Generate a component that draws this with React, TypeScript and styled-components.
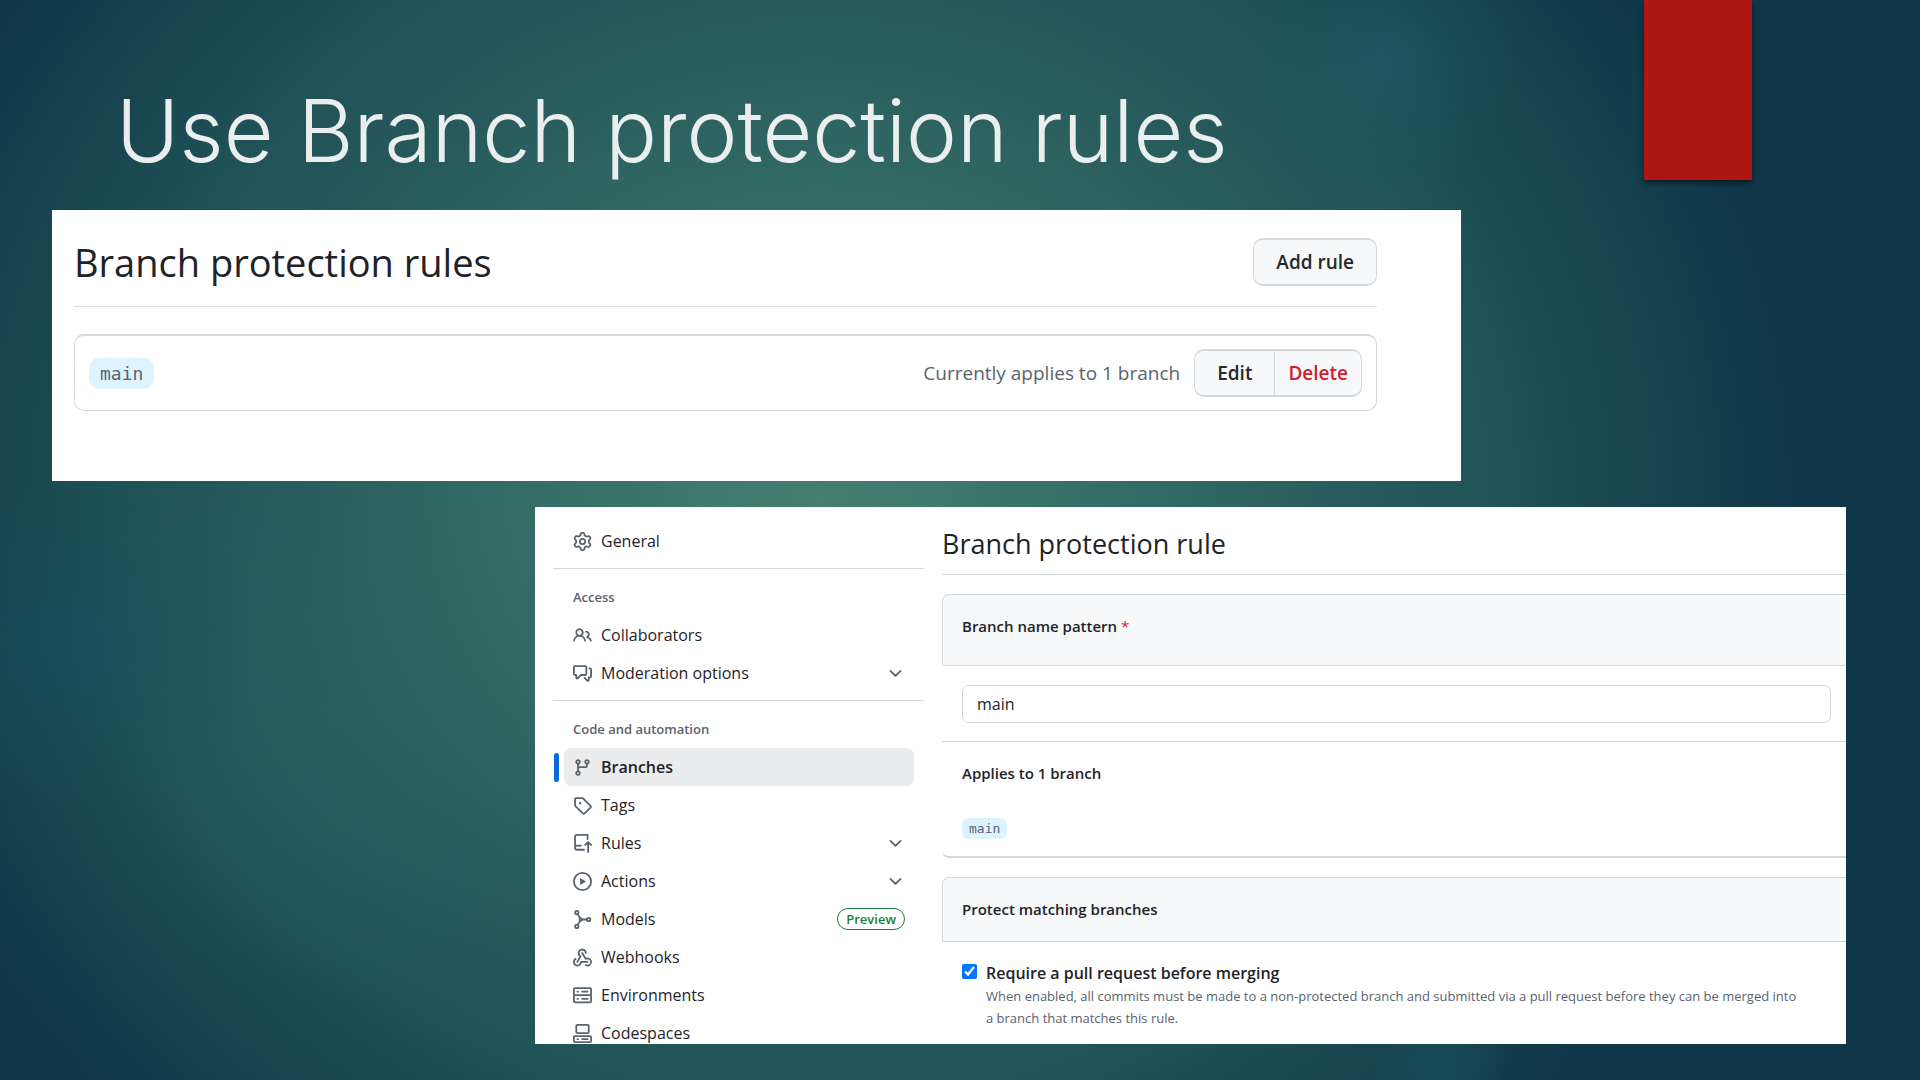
import React from "react";
import styled, { createGlobalStyle } from "styled-components";

const ui = `"Open Sans", "Noto Sans", sans-serif`;
const mono = `"DejaVu Sans Mono", "Liberation Mono", monospace`;
const line = "#d1d9e0";
const ink = "#1f2328";
const muted = "#59636e";

const GlobalStyle = createGlobalStyle`
  *, *::before, *::after { box-sizing: border-box; }
  body { margin: 0; background: #123c4a; font-family: ${ui}; color: ${ink}; }
  h1, h2, h3, p, ul { margin: 0; padding: 0; }
  ul { list-style: none; }
`;

const Slide = styled.main`
  position: relative;
  display: flex;
  flex-direction: column;
  min-height: 100vh;
  padding: 0 74px 36px 52px;
  overflow: hidden;
  background:
    radial-gradient(circle at 1385px 60px, rgba(30, 88, 102, 0.7) 0, rgba(30, 88, 102, 0) 130px),
    radial-gradient(circle at 1440px 1070px, rgba(28, 84, 98, 0.6) 0, rgba(28, 84, 98, 0) 70px),
    radial-gradient(circle at 90px 640px, rgba(26, 80, 98, 0.6) 0, rgba(26, 80, 98, 0) 170px),
    radial-gradient(circle at 330px 720px, rgba(44, 102, 100, 0.4) 0, rgba(44, 102, 100, 0) 280px),
    radial-gradient(ellipse 1000px 900px at 820px 500px, #467f70 0%, #326b65 33%, #285a5c 54%, #1f5156 70%, #184550 82%, #0f3749 98%);
`;

const Ribbon = styled.div`
  position: absolute;
  top: 0;
  right: 168px;
  width: 108px;
  height: 180px;
  background: #ae1613;
  box-shadow: 0 3px 5px rgba(0, 0, 0, 0.5);
`;

const Title = styled.h1`
  padding: 81px 300px 29px 64px;
  font-family: Inter, Lato, sans-serif;
  font-size: 86px;
  line-height: 100px;
  font-weight: 300;
  color: #ebeeee;
`;

const RulesCard = styled.section`
  margin-right: 385px;
  padding: 28px 84px 70px 22px;
  background: #fff;
`;

const RulesHeader = styled.header`
  display: flex;
  align-items: center;
  justify-content: space-between;
  padding-bottom: 20px;
  border-bottom: 1px solid #dde2e7;
`;

const RulesHeading = styled.h2`
  font-size: 38px;
  line-height: 48px;
  font-weight: 400;
`;

const Button = styled.button<{ $danger?: boolean }>`
  height: 48px;
  padding: 0 22px;
  border: solid ${line};
  border-width: 2px 1px;
  border-radius: 10px;
  background: #f6f8fa;
  color: ${(p) => (p.$danger ? "#cf222e" : "#25292e")};
  font-family: ${ui};
  font-size: 19px;
  font-weight: 600;
  white-space: nowrap;
`;

const ButtonGroup = styled.div`
  display: flex;
  ${Button}:first-child { border-radius: 10px 0 0 10px; }
  ${Button}:last-child { border-radius: 0 10px 10px 0; border-left: 0; padding: 0 13px; }
`;

const RuleRow = styled.div`
  display: flex;
  align-items: center;
  gap: 14px;
  margin-top: 27px;
  padding: 13px 14px;
  border: solid ${line};
  border-width: 2px 1px 1px;
  border-radius: 10px;
`;

const BranchTag = styled.code<{ $large?: boolean }>`
  display: block;
  width: fit-content;
  padding: 0 ${(p) => (p.$large ? 11 : 7)}px;
  border-radius: ${(p) => (p.$large ? 10 : 6)}px;
  background: #ddf4ff;
  color: ${muted};
  font-family: ${mono};
  font-size: ${(p) => (p.$large ? 18 : 13)}px;
  line-height: ${(p) => (p.$large ? 31 : 21)}px;
`;

const AppliesNote = styled.span`
  margin-left: auto;
  color: ${muted};
  font-size: 19px;
`;

const SettingsCard = styled.section`
  display: grid;
  grid-template-columns: 389px 1fr;
  column-gap: 18px;
  max-height: 537px;
  margin: 26px 0 0 483px;
  overflow: hidden;
  background: #fff;
`;

const Sidebar = styled.nav`
  padding: 15px 0 0 18px;
`;

const NavGroup = styled.div`
  & + & {
    margin-top: 8px;
    padding-top: 9px;
    border-top: 1px solid ${line};
  }
`;

const NavHeading = styled.h3`
  padding: 0 20px;
  color: ${muted};
  font-size: 13px;
  line-height: 38px;
  font-weight: 600;
`;

const NavLink = styled.a<{ $current?: boolean }>`
  position: relative;
  display: flex;
  align-items: center;
  gap: 9px;
  height: 38px;
  margin: 0 10px 0 11px;
  padding: 0 9px;
  border-radius: 7px;
  background: ${(p) => (p.$current ? "#ebecee" : "transparent")};
  color: ${ink};
  font-size: 16px;
  font-weight: ${(p) => (p.$current ? 600 : 400)};
  text-decoration: none;

  &::before {
    content: "";
    display: ${(p) => (p.$current ? "block" : "none")};
    position: absolute;
    left: -10px;
    top: 5px;
    bottom: 4px;
    width: 5px;
    border-radius: 3px;
    background: #0969da;
  }
`;

const Icon = styled.svg`
  flex: none;
  width: 19px;
  height: 19px;
  fill: ${muted};
`;

const NavLabel = styled.span`
  flex: 1;
`;

const Preview = styled.span`
  padding: 0 8px;
  border: 1px solid #1a7f37;
  border-radius: 11px;
  color: #1a7f37;
  font-size: 13px;
  line-height: 20px;
  font-weight: 600;
`;

const Detail = styled.div`
  padding-top: 15px;
`;

const DetailHeading = styled.h2`
  height: 53px;
  border-bottom: 1px solid ${line};
  font-size: 27px;
  line-height: 44px;
  font-weight: 400;
`;

const BoxHeader = styled.div<{ $tall?: boolean }>`
  height: ${(p) => (p.$tall ? 72 : 65)}px;
  margin-top: 19px;
  padding-left: 19px;
  border: 1px solid ${line};
  border-right: 0;
  border-radius: 7px 0 0 0;
  background: #f6f8fa;
  font-size: 15px;
  line-height: 62px;
  font-weight: 600;
`;

const BoxRow = styled.div`
  padding: 19px 15px 18px 20px;
  border-bottom: 1px solid ${line};
`;

const PatternInput = styled.input`
  display: block;
  width: 100%;
  height: 38px;
  padding: 0 14px;
  border: 1px solid ${line};
  border-radius: 7px;
  background: #fff;
  color: ${ink};
  font-family: ${ui};
  font-size: 16px;
`;

const AppliesRow = styled.div`
  padding: 19px 20px 17px;
  border-bottom: 2px solid ${line};
  border-radius: 0 0 0 7px;
`;

const AppliesTitle = styled.h3`
  margin-bottom: 33px;
  font-size: 15px;
  line-height: 24px;
  font-weight: 600;
`;

const Required = styled.span`
  color: #d1242f;
  font-weight: 400;
`;

const CheckRow = styled.div`
  display: grid;
  grid-template-columns: 15px 1fr;
  column-gap: 9px;
  padding: 19px 15px 16px 20px;
`;

const Check = styled.input`
  width: 15px;
  height: 15px;
  margin: 3px 0 0;
  accent-color: #0075ff;
`;

const CheckLabel = styled.label`
  font-size: 16px;
  line-height: 24px;
  font-weight: 600;
`;

const CheckNote = styled.p`
  grid-column: 2;
  padding-right: 30px;
  color: ${muted};
  font-size: 13px;
  line-height: 22px;
`;

const icons = {
  gear: "M8 0a8.2 8.2 0 0 1 .701.031C9.444.095 9.99.645 10.16 1.29l.288 1.107c.018.066.079.158.212.224.231.114.454.243.668.386.123.082.233.09.299.071l1.103-.303c.644-.176 1.392.021 1.82.63.27.385.506.792.704 1.218.315.675.111 1.422-.364 1.891l-.814.806c-.049.048-.098.147-.088.294.016.257.016.515 0 .772-.01.147.038.246.088.294l.814.806c.475.469.679 1.216.364 1.891a7.977 7.977 0 0 1-.704 1.217c-.428.61-1.176.807-1.82.63l-1.102-.302c-.067-.019-.177-.011-.3.071a5.909 5.909 0 0 1-.668.386c-.133.066-.194.158-.211.224l-.29 1.106c-.168.646-.715 1.196-1.458 1.26a8.006 8.006 0 0 1-1.402 0c-.743-.064-1.289-.614-1.458-1.26l-.289-1.106c-.018-.066-.079-.158-.212-.224a5.738 5.738 0 0 1-.668-.386c-.123-.082-.233-.09-.299-.071l-1.103.303c-.644.176-1.392-.021-1.82-.63a8.12 8.12 0 0 1-.704-1.218c-.315-.675-.111-1.422.363-1.891l.815-.806c.05-.048.098-.147.088-.294a6.214 6.214 0 0 1 0-.772c.01-.147-.038-.246-.088-.294l-.815-.806C.635 6.045.431 5.298.746 4.623a7.92 7.92 0 0 1 .704-1.217c.428-.61 1.176-.807 1.82-.63l1.102.302c.067.019.177.011.3-.071.214-.143.437-.272.668-.386.133-.066.194-.158.211-.224l.29-1.106C6.009.645 6.556.095 7.299.03 7.53.01 7.764 0 8 0Zm-.571 1.525c-.036.003-.108.036-.137.146l-.289 1.105c-.147.561-.549.967-.998 1.189-.173.086-.34.183-.5.29-.417.278-.97.423-1.529.27l-1.103-.303c-.109-.03-.175.016-.195.045-.22.312-.412.644-.573.99-.014.031-.021.11.059.19l.815.806c.411.406.562.957.53 1.456a4.709 4.709 0 0 0 0 .582c.032.499-.119 1.05-.53 1.456l-.815.806c-.081.08-.073.159-.059.19.162.346.353.677.573.989.02.03.085.076.195.046l1.102-.303c.56-.153 1.113-.008 1.53.27.161.107.328.204.501.29.447.222.85.629.997 1.189l.289 1.105c.029.109.101.143.137.146a6.6 6.6 0 0 0 1.142 0c.036-.003.108-.036.137-.146l.289-1.105c.147-.561.549-.967.998-1.189.173-.086.34-.183.5-.29.417-.278.97-.423 1.529-.27l1.103.303c.109.029.175-.016.195-.045.22-.313.411-.644.573-.99.014-.031.021-.11-.059-.19l-.815-.806c-.411-.406-.562-.957-.53-1.456a4.709 4.709 0 0 0 0-.582c-.032-.499.119-1.05.53-1.456l.815-.806c.081-.08.073-.159.059-.19a6.464 6.464 0 0 0-.573-.989c-.02-.03-.085-.076-.195-.046l-1.102.303c-.56.153-1.113.008-1.53-.27a4.44 4.44 0 0 0-.501-.29c-.447-.222-.85-.629-.997-1.189l-.289-1.105c-.029-.11-.101-.143-.137-.146a6.6 6.6 0 0 0-1.142 0ZM11 8a3 3 0 1 1-6 0 3 3 0 0 1 6 0ZM9.5 8a1.5 1.5 0 1 0-3.001.001A1.5 1.5 0 0 0 9.5 8Z",
  people: "M2 5.5a3.5 3.5 0 1 1 5.898 2.549 5.508 5.508 0 0 1 3.034 4.084.75.75 0 1 1-1.482.235 4 4 0 0 0-7.9 0 .75.75 0 0 1-1.482-.236A5.507 5.507 0 0 1 3.102 8.05 3.493 3.493 0 0 1 2 5.5ZM11 4a3.001 3.001 0 0 1 2.22 5.018 5.01 5.01 0 0 1 2.56 3.012.749.749 0 0 1-.885.954.752.752 0 0 1-.549-.514 3.507 3.507 0 0 0-2.522-2.372.75.75 0 0 1-.574-.73v-.352a.75.75 0 0 1 .416-.672A1.5 1.5 0 0 0 11 5.5.75.75 0 0 1 11 4Zm-5.5-.5a2 2 0 1 0-.001 3.999A2 2 0 0 0 5.5 3.5Z",
  comments: "M1.75 1h8.5c.966 0 1.75.784 1.75 1.75v5.5A1.75 1.75 0 0 1 10.25 10H7.061l-2.574 2.573A1.458 1.458 0 0 1 2 11.543V10h-.25A1.75 1.75 0 0 1 0 8.25v-5.5C0 1.784.784 1 1.75 1ZM1.5 2.75v5.5c0 .138.112.25.25.25h1a.75.75 0 0 1 .75.75v2.19l2.72-2.72a.749.749 0 0 1 .53-.22h3.5a.25.25 0 0 0 .25-.25v-5.5a.25.25 0 0 0-.25-.25h-8.5a.25.25 0 0 0-.25.25Zm13 2a.25.25 0 0 0-.25-.25h-.5a.75.75 0 0 1 0-1.5h.5c.966 0 1.75.784 1.75 1.75v5.5A1.75 1.75 0 0 1 14.25 12H14v1.543a1.458 1.458 0 0 1-2.487 1.03L9.22 12.28a.749.749 0 0 1 .326-1.275.749.749 0 0 1 .734.215l2.22 2.22v-2.19a.75.75 0 0 1 .75-.75h1a.25.25 0 0 0 .25-.25Z",
  branch: "M9.5 3.25a2.25 2.25 0 1 1 3 2.122V6A2.5 2.5 0 0 1 10 8.5H6a1 1 0 0 0-1 1v1.128a2.251 2.251 0 1 1-1.5 0V5.372a2.25 2.25 0 1 1 1.5 0v1.836A2.493 2.493 0 0 1 6 7h4a1 1 0 0 0 1-1v-.628A2.25 2.25 0 0 1 9.5 3.25Zm-6 0a.75.75 0 1 0 1.5 0 .75.75 0 0 0-1.5 0Zm8.25-.75a.75.75 0 1 0 0 1.5.75.75 0 0 0 0-1.5ZM4.25 12a.75.75 0 1 0 0 1.5.75.75 0 0 0 0-1.5Z",
  tag: "M1 7.775V2.75C1 1.784 1.784 1 2.75 1h5.025c.464 0 .91.184 1.238.513l6.25 6.25a1.75 1.75 0 0 1 0 2.474l-5.026 5.026a1.75 1.75 0 0 1-2.474 0l-6.25-6.25A1.752 1.752 0 0 1 1 7.775Zm1.5 0c0 .066.026.13.073.177l6.25 6.25a.25.25 0 0 0 .354 0l5.025-5.025a.25.25 0 0 0 0-.354l-6.25-6.25a.25.25 0 0 0-.177-.073H2.75a.25.25 0 0 0-.25.25ZM6 5a1 1 0 1 1 0 2 1 1 0 0 1 0-2Z",
  push: "M1 2.5A2.5 2.5 0 0 1 3.5 0h8.75a.75.75 0 0 1 .75.75v3.5a.75.75 0 0 1-1.5 0V1.5h-8a1 1 0 0 0-1 1v6.708A2.493 2.493 0 0 1 3.5 9h3.25a.75.75 0 0 1 0 1.5H3.5a1 1 0 0 0 0 2h5.75a.75.75 0 0 1 0 1.5H3.5A2.5 2.5 0 0 1 1 11.5ZM12.22 6.22a.75.75 0 0 1 1.06 0l2.5 2.5a.75.75 0 0 1-1.06 1.06L13.5 8.56v6.69a.75.75 0 0 1-1.5 0V8.56l-1.22 1.22a.75.75 0 0 1-1.06-1.06Z",
  play: "M8 0a8 8 0 1 1 0 16A8 8 0 0 1 8 0ZM1.5 8a6.5 6.5 0 1 0 13 0 6.5 6.5 0 0 0-13 0Zm4.879-2.773 4.264 2.559a.25.25 0 0 1 0 .428l-4.264 2.559A.25.25 0 0 1 6 10.559V5.442a.25.25 0 0 1 .379-.215Z",
  webhook: "M5.5 4.25a2.25 2.25 0 0 1 4.5 0 .75.75 0 0 0 1.5 0 3.75 3.75 0 1 0-6.14 2.889l-2.272 4.258a.75.75 0 0 0 1.324.706L7 7.25a.75.75 0 0 0-.309-1.015A2.25 2.25 0 0 1 5.5 4.25ZM7.364 3.607a.75.75 0 0 1 1.03.257l2.608 4.349a3.75 3.75 0 1 1-.628 6.785.75.75 0 0 1 .752-1.299 2.25 2.25 0 1 0-.033-3.88.75.75 0 0 1-1.03-.256L7.107 4.636a.75.75 0 0 1 .257-1.03ZM2.9 8.776A.75.75 0 0 1 2.625 9.8 2.25 2.25 0 1 0 6 11.75a.75.75 0 0 1 .75-.751h5.5a.75.75 0 0 1 0 1.5H7.425a3.751 3.751 0 1 1-5.55-3.998.75.75 0 0 1 1.024.274Z",
  server: "M1.75 1h12.5c.966 0 1.75.784 1.75 1.75v4c0 .372-.116.717-.314 1 .198.283.314.628.314 1v4a1.75 1.75 0 0 1-1.75 1.75H1.75A1.75 1.75 0 0 1 0 12.75v-4c0-.358.109-.707.314-1a1.739 1.739 0 0 1-.314-1v-4C0 1.784.784 1 1.75 1ZM1.5 2.75v4c0 .138.112.25.25.25h12.5a.25.25 0 0 0 .25-.25v-4a.25.25 0 0 0-.25-.25H1.75a.25.25 0 0 0-.25.25Zm.25 5.75a.25.25 0 0 0-.25.25v4c0 .138.112.25.25.25h12.5a.25.25 0 0 0 .25-.25v-4a.25.25 0 0 0-.25-.25ZM7 4.75A.75.75 0 0 1 7.75 4h4.5a.75.75 0 0 1 0 1.5h-4.5A.75.75 0 0 1 7 4.75ZM7.75 10h4.5a.75.75 0 0 1 0 1.5h-4.5a.75.75 0 0 1 0-1.5ZM3 4.75A.75.75 0 0 1 3.75 4h.5a.75.75 0 0 1 0 1.5h-.5A.75.75 0 0 1 3 4.75ZM3.75 10h.5a.75.75 0 0 1 0 1.5h-.5a.75.75 0 0 1 0-1.5Z",
  codespaces: "M0 11.25c0-.966.784-1.75 1.75-1.75h12.5c.966 0 1.75.784 1.75 1.75v3A1.75 1.75 0 0 1 14.25 16H1.75A1.75 1.75 0 0 1 0 14.25Zm2-9.5C2 .784 2.784 0 3.75 0h8.5C13.216 0 14 .784 14 1.75v5a1.75 1.75 0 0 1-1.75 1.75h-8.5A1.75 1.75 0 0 1 2 6.75Zm1.75-.25a.25.25 0 0 0-.25.25v5c0 .138.112.25.25.25h8.5a.25.25 0 0 0 .25-.25v-5a.25.25 0 0 0-.25-.25Zm-2 9.5a.25.25 0 0 0-.25.25v3c0 .138.112.25.25.25h12.5a.25.25 0 0 0 .25-.25v-3a.25.25 0 0 0-.25-.25ZM7 12.75a.75.75 0 0 1 .75-.75h4.5a.75.75 0 0 1 0 1.5h-4.5a.75.75 0 0 1-.75-.75Zm-4 0a.75.75 0 0 1 .75-.75h.5a.75.75 0 0 1 0 1.5h-.5a.75.75 0 0 1-.75-.75Z",
  chevron: "M12.78 5.22a.749.749 0 0 1 0 1.06l-4.25 4.25a.749.749 0 0 1-1.06 0L3.22 6.28a.749.749 0 1 1 1.06-1.06L8 8.939l3.72-3.719a.749.749 0 0 1 1.06 0Z",
};

type IconName = keyof typeof icons | "models";

function Glyph({ name }: { name: IconName }) {
  if (name === "models") {
    return (
      <Icon viewBox="0 0 16 16" aria-hidden="true">
        <g fill="none" stroke={muted} strokeWidth="1.5">
          <circle cx="3.2" cy="2.2" r="1.4" />
          <circle cx="3.2" cy="13.8" r="1.4" />
          <circle cx="13.2" cy="8" r="1.4" />
          <path strokeLinejoin="round" d="M4 3.5 5.7 6.4V9.6L4 12.5M5.7 6.4 8.3 8 5.7 9.6M8.3 8h3.5" />
        </g>
      </Icon>
    );
  }
  return (
    <Icon viewBox="0 0 16 16" aria-hidden="true">
      <path fillRule={name === "webhook" ? "nonzero" : "evenodd"} d={icons[name]} />
    </Icon>
  );
}

type Item = { label: string; icon: IconName; current?: boolean; expandable?: boolean; preview?: boolean };

const groups: { heading?: string; items: Item[] }[] = [
  { items: [{ label: "General", icon: "gear" }] },
  {
    heading: "Access",
    items: [
      { label: "Collaborators", icon: "people" },
      { label: "Moderation options", icon: "comments", expandable: true },
    ],
  },
  {
    heading: "Code and automation",
    items: [
      { label: "Branches", icon: "branch", current: true },
      { label: "Tags", icon: "tag" },
      { label: "Rules", icon: "push", expandable: true },
      { label: "Actions", icon: "play", expandable: true },
      { label: "Models", icon: "models", preview: true },
      { label: "Webhooks", icon: "webhook" },
      { label: "Environments", icon: "server" },
      { label: "Codespaces", icon: "codespaces" },
    ],
  },
];

export default function App() {
  return (
    <>
      <GlobalStyle />
      <Slide>
        <Ribbon />
        <Title>Use Branch protection rules</Title>

        <RulesCard>
          <RulesHeader>
            <RulesHeading>Branch protection rules</RulesHeading>
            <Button>Add rule</Button>
          </RulesHeader>
          <RuleRow>
            <BranchTag $large>main</BranchTag>
            <AppliesNote>Currently applies to 1 branch</AppliesNote>
            <ButtonGroup>
              <Button>Edit</Button>
              <Button $danger>Delete</Button>
            </ButtonGroup>
          </RuleRow>
        </RulesCard>

        <SettingsCard>
          <Sidebar>
            {groups.map((group, index) => (
              <NavGroup key={index}>
                {group.heading && <NavHeading>{group.heading}</NavHeading>}
                <ul>
                  {group.items.map((item) => (
                    <li key={item.label}>
                      <NavLink href="#" $current={item.current} aria-current={item.current ? "page" : undefined}>
                        <Glyph name={item.icon} />
                        <NavLabel>{item.label}</NavLabel>
                        {item.expandable && <Glyph name="chevron" />}
                        {item.preview && <Preview>Preview</Preview>}
                      </NavLink>
                    </li>
                  ))}
                </ul>
              </NavGroup>
            ))}
          </Sidebar>

          <Detail>
            <DetailHeading>Branch protection rule</DetailHeading>
            <BoxHeader $tall>
              <label htmlFor="pattern">
                Branch name pattern <Required>*</Required>
              </label>
            </BoxHeader>
            <BoxRow>
              <PatternInput id="pattern" type="text" defaultValue="main" />
            </BoxRow>
            <AppliesRow>
              <AppliesTitle>Applies to 1 branch</AppliesTitle>
              <BranchTag>main</BranchTag>
            </AppliesRow>
            <BoxHeader>Protect matching branches</BoxHeader>
            <CheckRow>
              <Check id="require-pr" type="checkbox" defaultChecked />
              <CheckLabel htmlFor="require-pr">Require a pull request before merging</CheckLabel>
              <CheckNote>
                When enabled, all commits must be made to a non-protected branch and submitted via a pull request
                before they can be merged into a branch that matches this rule.
              </CheckNote>
            </CheckRow>
          </Detail>
        </SettingsCard>
      </Slide>
    </>
  );
}
